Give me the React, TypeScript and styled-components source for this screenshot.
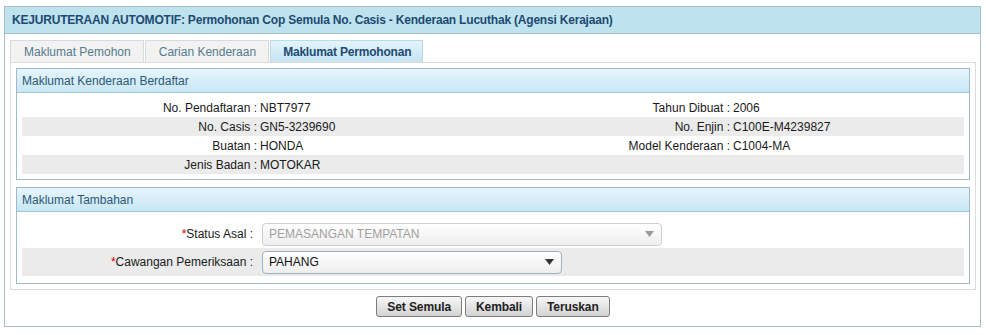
import React from 'react';
import styled, { createGlobalStyle } from 'styled-components';

const GlobalStyle = createGlobalStyle`
  body {
    margin: 0;
    background: #ffffff;
    color: #1a1a1a;
    font-family: 'Liberation Sans', Arial, sans-serif;
    font-size: 12px;
  }
`;

const Page = styled.div`
  padding: 6px 5px 0 4px;
`;

const Box = styled.div`
  border: 1px solid #a3bfc9;
`;

const Title = styled.div`
  background: #bfe3ee;
  border-bottom: 1px solid #a3bfc9;
  color: #1d4a72;
  font-weight: bold;
  height: 26px;
  letter-spacing: -0.2px;
  line-height: 27px;
  padding-left: 7px;
`;

const Body = styled.div`
  padding: 6px 4px 9px 5px;
`;

const Tabs = styled.div`
  display: flex;
  gap: 1px;
`;

const Tab = styled.div<{ $active?: boolean }>`
  background: ${(p) => (p.$active ? 'linear-gradient(#e4f4fb, #c3e4f2)' : '#f2f2f2')};
  border: 1px solid ${(p) => (p.$active ? '#bcdbe8' : '#dadada')};
  border-bottom: none;
  color: ${(p) => (p.$active ? '#1d4a72' : '#557a8e')};
  font-weight: ${(p) => (p.$active ? 'bold' : 'normal')};
  height: 21px;
  letter-spacing: ${(p) => (p.$active ? '-0.2px' : '0')};
  line-height: 22px;
  padding: ${(p) => (p.$active ? '0 11px 0 12px' : '0 12px 0 13px')};
`;

const Panel = styled.div`
  border: 1px solid #dcdcdc;
  display: flex;
  flex-direction: column;
  gap: 7px;
  padding: 5px;
`;

const Fieldset = styled.div`
  border: 1px solid #9dbac6;
`;

const Legend = styled.div`
  background: linear-gradient(#e6f5fc, #c8e7f5);
  border-bottom: 1px solid #9dc3d5;
  color: #2b5876;
  height: 23px;
  line-height: 24px;
  padding-left: 5px;
`;

const InfoGrid = styled.div`
  display: grid;
  grid-template-columns: 235px 238px 235px 1fr;
  padding: 5px;
`;

const Cell = styled.div<{ $shade?: boolean; $label?: boolean }>`
  background: ${(p) => (p.$shade ? '#ebebeb' : 'transparent')};
  height: 19px;
  line-height: 20px;
  padding-left: ${(p) => (p.$label ? '0' : '3px')};
  text-align: ${(p) => (p.$label ? 'right' : 'left')};
  white-space: nowrap;
`;

const FormBody = styled.div`
  padding: 8px 5px 7px;
`;

const FormRow = styled.div<{ $shade?: boolean }>`
  align-items: center;
  background: ${(p) => (p.$shade ? '#ebebeb' : 'transparent')};
  display: grid;
  grid-template-columns: 236px 1fr;
  height: 28px;
`;

const FormLabel = styled.div`
  padding-right: 5px;
  text-align: right;
`;

const Star = styled.span`
  color: #d40000;
`;

const SelectBox = styled.div<{ $width: number; $disabled?: boolean }>`
  align-items: center;
  background: linear-gradient(#ffffff, #eeeeee);
  border: 1px solid ${(p) => (p.$disabled ? '#cfcfcf' : '#9fb0c0')};
  border-radius: 4px;
  box-sizing: border-box;
  color: ${(p) => (p.$disabled ? '#a0a0a0' : '#111111')};
  display: flex;
  height: 23px;
  justify-content: space-between;
  margin-left: 4px;
  padding: 0 7px 0 6px;
  width: ${(p) => p.$width}px;
`;

const Buttons = styled.div`
  display: flex;
  gap: 3px;
  justify-content: center;
  margin-top: 6px;
`;

const Button = styled.button`
  background: linear-gradient(#f7f7f7, #d3d3d3);
  border: 1px solid #7d7d7d;
  border-radius: 3px;
  color: #222222;
  font-family: 'Liberation Sans', Arial, sans-serif;
  font-size: 12px;
  font-weight: bold;
  height: 21px;
  letter-spacing: -0.1px;
  padding: 0 10px;
`;

function Arrow({ color }: { color: string }) {
  return (
    <svg width="9" height="6" viewBox="0 0 9 6">
      <path d="M0 0 L9 0 L4.5 6 Z" fill={color} />
    </svg>
  );
}

const info: [string, string, string, string][] = [
  ['No. Pendaftaran :', 'NBT7977', 'Tahun Dibuat :', '2006'],
  ['No. Casis :', 'GN5-3239690', 'No. Enjin :', 'C100E-M4239827'],
  ['Buatan :', 'HONDA', 'Model Kenderaan :', 'C1004-MA'],
  ['Jenis Badan :', 'MOTOKAR', '', ''],
];

export default function App() {
  return (
    <Page>
      <GlobalStyle />
      <Box>
        <Title>KEJURUTERAAN AUTOMOTIF: Permohonan Cop Semula No. Casis - Kenderaan Lucuthak (Agensi Kerajaan)</Title>
        <Body>
          <Tabs>
            <Tab>Maklumat Pemohon</Tab>
            <Tab>Carian Kenderaan</Tab>
            <Tab $active>Maklumat Permohonan</Tab>
          </Tabs>
          <Panel>
            <Fieldset>
              <Legend>Maklumat Kenderaan Berdaftar</Legend>
              <InfoGrid>
                {info.map((row, i) =>
                  row.map((text, j) => (
                    <Cell key={`${i}-${j}`} $shade={i % 2 === 1} $label={j % 2 === 0}>
                      {text}
                    </Cell>
                  ))
                )}
              </InfoGrid>
            </Fieldset>
            <Fieldset>
              <Legend>Maklumat Tambahan</Legend>
              <FormBody>
                <FormRow>
                  <FormLabel>
                    <Star>*</Star>Status Asal :
                  </FormLabel>
                  <SelectBox $width={400} $disabled>
                    <span>PEMASANGAN TEMPATAN</span>
                    <Arrow color="#9a9a9a" />
                  </SelectBox>
                </FormRow>
                <FormRow $shade>
                  <FormLabel>
                    <Star>*</Star>Cawangan Pemeriksaan :
                  </FormLabel>
                  <SelectBox $width={300}>
                    <span>PAHANG</span>
                    <Arrow color="#333333" />
                  </SelectBox>
                </FormRow>
              </FormBody>
            </Fieldset>
          </Panel>
          <Buttons>
            <Button>Set Semula</Button>
            <Button>Kembali</Button>
            <Button>Teruskan</Button>
          </Buttons>
        </Body>
      </Box>
    </Page>
  );
}
